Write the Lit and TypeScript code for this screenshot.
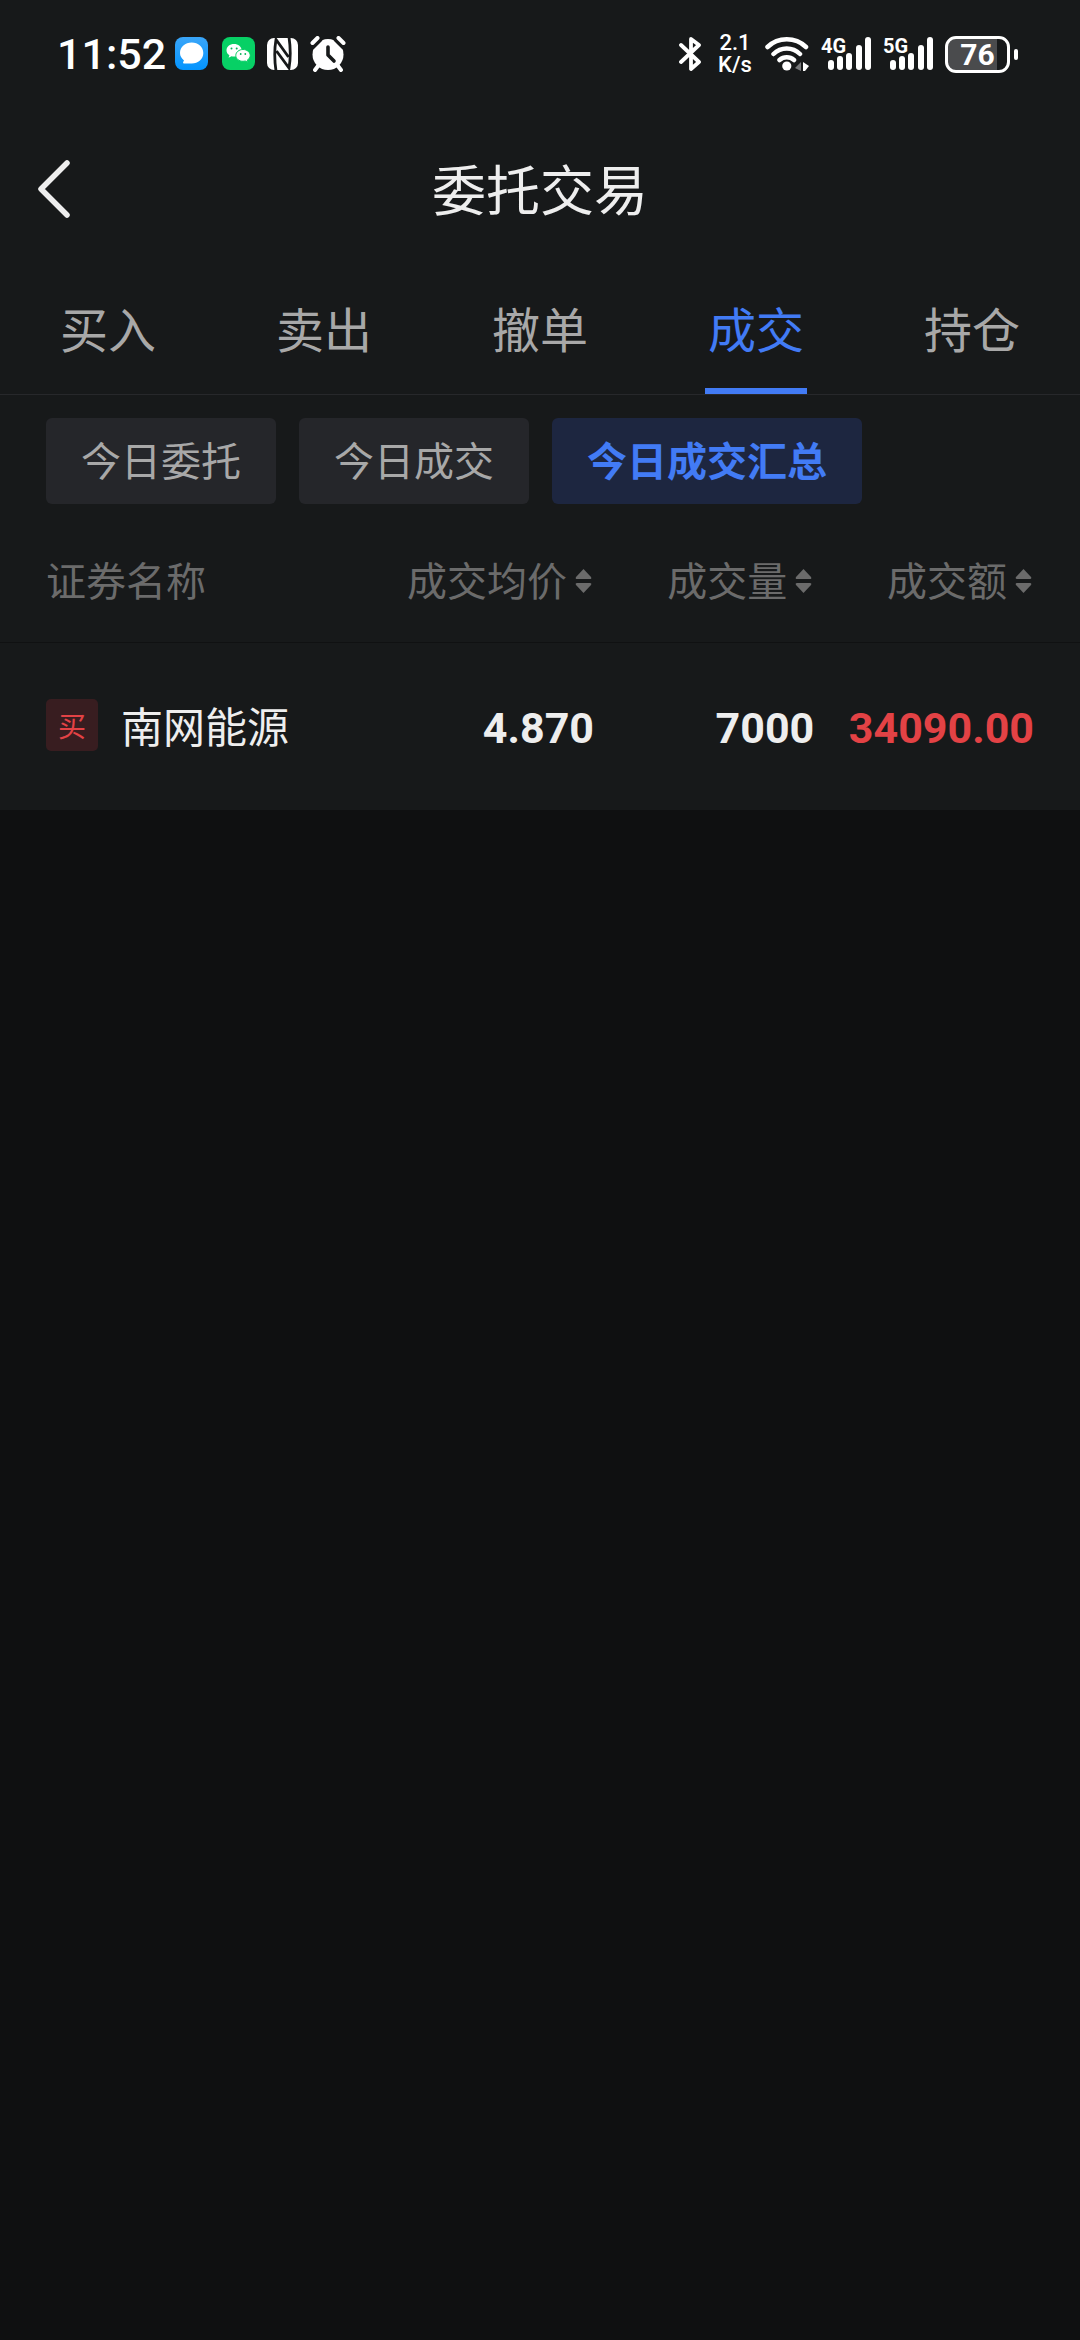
import { LitElement, html, css, svg } from "lit";
import { customElement, state } from "lit/decorators.js";
import { classMap } from "lit/directives/class-map.js";

const sans = css`Roboto, "Noto Sans CJK SC", "Noto Sans", sans-serif`;

@customElement("signal-icon")
class SignalIcon extends LitElement {
  static properties = { label: {} };
  declare label: string;

  static styles = css`
    :host { display: block; }
    svg { display: block; }
    .net { font: 700 20px ${sans}; fill: #fff; }
  `;

  render() {
    const bars = [
      [10, 28],
      [19, 24],
      [28, 21],
      [38, 13],
      [47, 5],
    ];
    return html`<svg width="50" height="44" viewBox="0 0 50 44" aria-hidden="true">
      <text class="net" x="0" y="21">${this.label}</text>
      ${bars.map(([x, top]) => svg`<rect x=${x - 3} y=${top} width="6" height=${38 - top} rx="3" fill="#fff"/>`)}
    </svg>`;
  }
}

@customElement("status-bar")
class StatusBar extends LitElement {
  static styles = css`
    :host {
      display: flex;
      align-items: center;
      justify-content: space-between;
      height: 108px;
      padding: 0 62px 0 57px;
      box-sizing: border-box;
      color: #fff;
      font-family: ${sans};
    }
    svg { display: block; }
    .clock { display: flex; align-items: center; gap: 9px; }
    .side { display: flex; align-items: center; gap: 12px; }
    .time { font-size: 43px; line-height: 52px; font-weight: 500; }
    .rate { display: flex; flex-direction: column; align-items: center; width: 36px; font-size: 22px; line-height: 22px; font-weight: 500; }
    .battery { display: flex; align-items: center; gap: 4px; }
    .cell {
      box-sizing: border-box;
      width: 65px;
      height: 37px;
      border: 3px solid #fff;
      border-radius: 11px;
      background: linear-gradient(90deg, #4a4b4d 83%, transparent 83%);
      font-size: 30px;
      line-height: 31px;
      font-weight: 700;
      text-align: center;
    }
    .nub { width: 4px; height: 11px; border-radius: 2px; background: #fff; }
  `;

  render() {
    return html`
      <div class="clock">
        <span class="time">11:52</span>
        <div class="side">
          <svg width="34" height="34" viewBox="0 0 34 34" aria-hidden="true">
            <defs><linearGradient id="b" x2="0" y2="1"><stop stop-color="#3aa5f8"/><stop offset="1" stop-color="#0394fe"/></linearGradient></defs>
            <rect width="33" height="33" rx="8" fill="url(#b)"/>
            <path fill="#fff" d="M16.700 5.500c6.500 0 11.600 4.500 11.600 10.500s-5.100 10.500-11.600 10.500H9.500c-1.400 0-1.800-.8-1.200-1.800l.7-1.300C6.500 21.500 5 19 5 16 5 10 10.200 5.500 16.700 5.500z"/>
          </svg>
          <svg width="34" height="34" viewBox="0 0 34 34" aria-hidden="true">
            <rect width="33" height="33" x="1" rx="8" fill="#07d065"/>
            <path fill="#fff" d="M13 7c4.200 0 7.600 2.700 7.600 6.300s-3.400 6.300-7.600 6.300c-.9 0-1.700-.1-2.500-.3L7.600 20.800l.8-2.500C6.600 17.200 5.500 15.400 5.500 13.300 5.500 9.700 8.800 7 13 7z"/>
            <path fill="#fff" stroke="#07d065" stroke-width="1" d="M22 12.500c-4 0-7.200 2.600-7.200 5.900s3.200 5.900 7.200 5.900c.8 0 1.600-.1 2.300-.3l2.700 1.400-.7-2.300c1.700-1 2.900-2.700 2.900-4.700 0-3.300-3.200-5.900-7.200-5.900z"/>
            <g fill="#07b558"><circle cx="10.500" cy="11.500" r="1"/><circle cx="15.700" cy="11.500" r="1"/><circle cx="19.700" cy="17" r=".9"/><circle cx="24.300" cy="17" r=".9"/></g>
          </svg>
          <svg width="31" height="34" viewBox="0 0 31 34" aria-hidden="true">
            <rect y="1" width="31" height="32" rx="7" fill="#fff"/>
            <path fill="none" stroke="#17191a" stroke-width="2.800" d="M9 34Q6.500 17 9 2.500L21.500 20M22 0Q24.500 17 22 31L9.500 14"/>
          </svg>
          <svg width="36" height="36" viewBox="0 0 36 36" aria-hidden="true">
            <circle cx="18" cy="18.500" r="15.500" fill="#fff"/>
            <path fill="none" stroke="#17191a" stroke-width="7" d="M1 11 10 2M35 11l-9-9"/>
            <path fill="none" stroke="#fff" stroke-width="4" stroke-linecap="round" d="M2.500 7l5-5M33.500 7l-5-5M8 30l-3 4M28 30l3 4"/>
            <path fill="none" stroke="#17191a" stroke-width="3.600" stroke-linecap="round" stroke-linejoin="round" d="M18 11v8l6 6"/>
          </svg>
        </div>
      </div>
      <div class="side">
        <svg width="26" height="36" viewBox="0 0 26 36" aria-hidden="true">
          <path fill="none" stroke="#fff" stroke-width="3.800" stroke-linecap="round" stroke-linejoin="round" d="M2 9l18 17-8 7V3l8 6L2 26"/>
        </svg>
        <span class="rate"><span>2.1</span><span>K/s</span></span>
        <svg width="44" height="36" viewBox="0 0 44 36" aria-hidden="true">
          <path fill="none" stroke="#fff" stroke-width="4.500" stroke-linecap="round" d="M2.500 11a28 28 0 0 1 38.500 0M8.500 18a19 19 0 0 1 26.500 0M14.500 24a11 11 0 0 1 14.500 0"/>
          <circle cx="21.800" cy="30" r="4.600" fill="#fff"/>
          <path fill="#77787a" d="M36 26v9l-6-3z"/><path fill="#fff" d="M38 26l6 4-4 5h-2z"/>
        </svg>
        <signal-icon label="4G"></signal-icon>
        <signal-icon label="5G"></signal-icon>
        <span class="battery"><span class="cell">76</span><span class="nub"></span></span>
      </div>
    `;
  }
}

@customElement("app-root")
class AppRoot extends LitElement {
  @state() private tab = "成交";
  @state() private view = "今日成交汇总";

  static styles = css`
    :host {
      display: block;
      min-height: 100vh;
      background: #0f1011;
      color: #eee;
      font-family: "Noto Sans CJK SC", "Noto Sans", sans-serif;
    }
    button {
      margin: 0;
      padding: 0;
      border: 0;
      background: none;
      color: inherit;
      font: inherit;
    }
    svg { display: block; }
    .panel { background: #17191a; }
    .bar {
      display: grid;
      grid-template-columns: 1fr auto 1fr;
      align-items: center;
      height: 162px;
    }
    .back { justify-self: start; padding: 16px 36px; }
    .title { margin: 0; padding-bottom: 2px; font-size: 54px; line-height: 80px; font-weight: 400; }
    .tabs { display: flex; border-bottom: 1px solid #27282b; }
    .tab {
      flex: 1;
      display: flex;
      justify-content: center;
      color: #a8a8a8;
      font-size: 48px;
      line-height: 114px;
    }
    .mark { padding: 0 3px 4px; border-bottom: 6px solid transparent; }
    .tab.on { color: #427bf5; }
    .tab.on .mark { border-color: #427bf5; }
    .chips { display: flex; gap: 23px; padding: 23px 46px 16px; }
    .chip {
      padding: 0 35px 4px;
      border-radius: 6px;
      background: #25262a;
      color: #a8a8a8;
      font-size: 40px;
      line-height: 82px;
    }
    .chip.on { background: #1d2640; color: #427bf5; font-weight: 700; }
    .deals { width: 100%; border-collapse: collapse; table-layout: fixed; }
    .deals th, .deals td { box-sizing: border-box; padding: 0; text-align: right; vertical-align: middle; }
    .deals th:first-child, .deals td:first-child { padding-left: 46px; text-align: left; }
    .deals th:last-child, .deals td:last-child { padding-right: 46px; }
    .deals th {
      height: 122px;
      padding-bottom: 4px;
      border-bottom: 1px solid #101112;
      color: #6b6b6b;
      font-size: 40px;
      line-height: 60px;
      font-weight: 400;
    }
    .deals td { height: 168px; }
    .name-col { width: 34.6%; }
    .col { width: 20.4%; }
    .sort { display: inline-flex; align-items: center; gap: 8px; padding-right: 2px; }
    .arrows { margin-top: 4px; }
    .stock { display: flex; align-items: center; gap: 23px; padding-bottom: 2px; font-size: 42px; line-height: 60px; white-space: nowrap; }
    .side {
      width: 52px;
      height: 52px;
      border-radius: 5px;
      background: #381d20;
      color: #e34245;
      font-size: 28px;
      line-height: 52px;
      text-align: center;
    }
    .deals .num { padding-top: 3px; font: 700 43px/52px ${sans}; }
    .up { color: #e34245; }
  `;

  private tabs = ["买入", "卖出", "撤单", "成交", "持仓"];
  private views = ["今日委托", "今日成交", "今日成交汇总"];
  private deals = [{ side: "买", name: "南网能源", price: "4.870", volume: "7000", amount: "34090.00" }];

  private sortHead(label: string) {
    return html`<th scope="col"><button class="sort">${label}
      <svg class="arrows" width="17" height="24" viewBox="0 0 17 24" aria-hidden="true">
        <path fill="#6b6b6b" d="M8.500 0 16 8Q17 10 15 10H2Q0 10 1 8zM8.500 24 16 16Q17 14 15 14H2Q0 14 1 16z"/>
      </svg></button></th>`;
  }

  render() {
    return html`
      <div class="panel">
        <status-bar></status-bar>
        <header class="bar">
          <button class="back" aria-label="返回">
            <svg width="36" height="60" viewBox="0 0 36 60" aria-hidden="true">
              <path fill="none" stroke="#eee" stroke-width="5.500" stroke-linecap="round" stroke-linejoin="round" d="M31 4 5 30l26 26"/>
            </svg>
          </button>
          <h1 class="title">委托交易</h1>
        </header>
        <nav class="tabs">
          ${this.tabs.map(
            (t) => html`<button class=${classMap({ tab: true, on: t === this.tab })} @click=${() => (this.tab = t)}>
              <span class="mark">${t}</span>
            </button>`
          )}
        </nav>
        <div class="chips">
          ${this.views.map(
            (v) => html`<button class=${classMap({ chip: true, on: v === this.view })} @click=${() => (this.view = v)}>${v}</button>`
          )}
        </div>
        <table class="deals">
          <colgroup><col class="name-col" /><col class="col" /><col class="col" /><col /></colgroup>
          <thead>
            <tr>
              <th scope="col">证券名称</th>
              ${this.sortHead("成交均价")} ${this.sortHead("成交量")} ${this.sortHead("成交额")}
            </tr>
          </thead>
          <tbody>
            ${this.deals.map(
              (d) => html`<tr>
                <td><div class="stock"><span class="side">${d.side}</span>${d.name}</div></td>
                <td class="num">${d.price}</td>
                <td class="num">${d.volume}</td>
                <td class="num up">${d.amount}</td>
              </tr>`
            )}
          </tbody>
        </table>
      </div>
    `;
  }
}
